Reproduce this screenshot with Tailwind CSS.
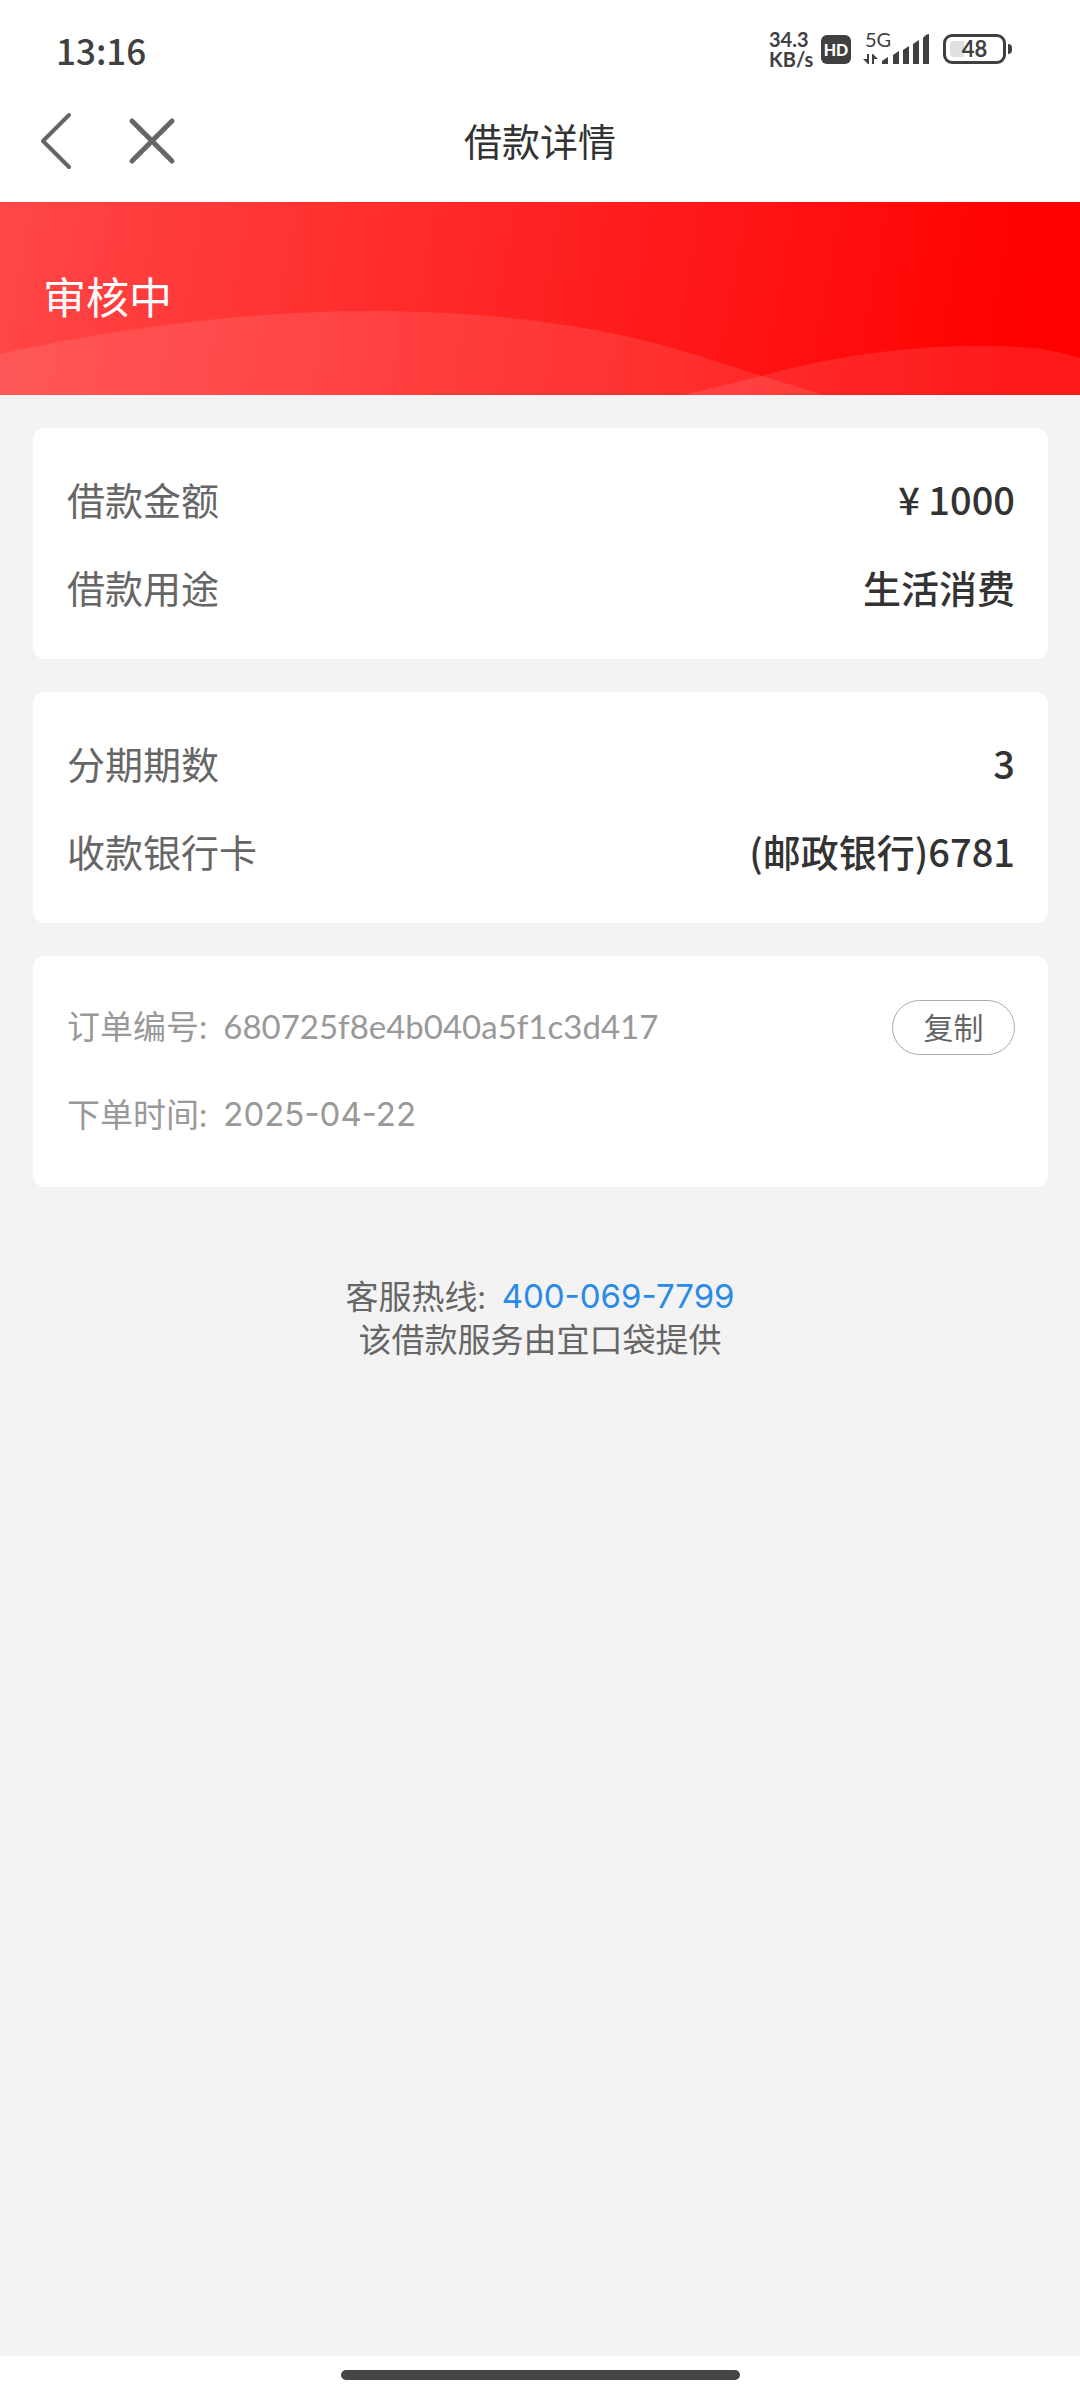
<!DOCTYPE html>
<html lang="zh-CN">
  <head>
    <meta charset="UTF-8" />
    <meta name="viewport" content="width=device-width, initial-scale=1.0" />
    <title>借款详情</title>
    <script src="https://cdn.jsdelivr.net/npm/@tailwindcss/browser@4"></script>
  </head>
  <body
    class="min-h-screen flex flex-col bg-[#f3f3f3] text-[#666666] font-['Lato','Noto_Sans_CJK_SC',sans-serif]"
  >
    <header class="bg-white text-[#333333]">
      <!-- Status bar -->
      <div class="flex items-center justify-between h-[98px] pl-14 pr-[68px] text-[#404040]">
        <span class="text-[35px] leading-none font-medium font-['Noto_Sans_CJK_SC',sans-serif]">13:16</span>
        <div class="flex items-center">
          <div class="w-[46px] text-[20px] leading-5 font-bold">
            <p>34.3</p>
            <p>KB/s</p>
          </div>
          <span
            class="ml-1.5 w-[30px] h-[29px] rounded-md bg-[#404040] text-white text-[16px] leading-[29px] text-center font-black"
            >HD</span
          >
          <div class="relative ml-3 w-[68px] h-8">
            <span class="absolute left-0.5 -top-1 text-[20px] leading-5">5G</span>
            <svg class="w-full h-full" viewBox="0 0 68 32" fill="#404040">
              <path d="M4 21h2v10H5l-5-5h4zM9 21h1l5 5h-4v5H9z" />
              <path d="M19 31v-3l6-4v7zM30 31V22l6-4v13zM40 31V17l6-4v18zM50 31V11l6-4v24zM60 31V5q3-4 6-4v30z" />
            </svg>
          </div>
          <div class="flex items-center ml-3">
            <div class="relative w-[63px] h-[30px] rounded-[9px] border-3 border-[#404040]">
              <span class="absolute left-1 top-1 w-[14px] h-4 rounded-l-sm bg-[#e0e0e0]"></span>
              <span class="absolute inset-0 text-center text-[22px] leading-6 font-bold">48</span>
            </div>
            <span class="ml-0.5 w-1 h-[10px] rounded-r-sm bg-[#404040]"></span>
          </div>
        </div>
      </div>

      <!-- Navigation bar -->
      <div class="grid grid-cols-3 items-center h-[104px] px-9 pb-[18px]">
        <div class="flex items-center gap-[46px]">
          <button type="button" aria-label="返回">
            <svg class="w-10 h-[60px]" viewBox="0 0 40 60" fill="none" stroke="#666666" stroke-width="4" stroke-linecap="round" stroke-linejoin="round">
              <path d="M33 4 7 30l26 26" />
            </svg>
          </button>
          <button type="button" aria-label="关闭">
            <svg class="w-[60px] h-[60px]" viewBox="0 0 60 60" fill="none" stroke="#666666" stroke-width="5" stroke-linecap="round">
              <path d="m10 10 40 40M50 10 10 50" />
            </svg>
          </button>
        </div>
        <h1 class="text-center text-[38px]">借款详情</h1>
      </div>
    </header>

    <main class="flex-grow">
      <section class="relative flex items-center h-[193px] px-[43px] bg-linear-100/srgb from-[#ff4747] to-[#ff0000] to-95%">
        <svg class="absolute inset-0 w-full h-full" viewBox="0 0 1080 193" preserveAspectRatio="none" fill="#ffffff" fill-opacity="0.1">
          <path d="M0 152C124 125 250 109 370 109S600 123 690 151L762 174 824 193H0z" />
          <path d="M683 193 762 174C830 154 910 144 975 144S1050 148 1080 156V193z" />
        </svg>
        <h2 class="relative text-[43px] text-white">审核中</h2>
      </section>

      <div class="flex flex-col gap-[33px] py-[33px] pl-[33px] pr-8">
        <dl class="rounded-xl bg-white pl-[34px] pr-[33px] pt-[26px] pb-[29px] text-[38px] font-['Noto_Sans_CJK_SC',sans-serif]">
          <div class="flex items-center justify-between h-[88px]">
            <dt>借款金额</dt>
            <dd class="font-medium text-[#333333]">¥ 1000</dd>
          </div>
          <div class="flex items-center justify-between h-[88px]">
            <dt>借款用途</dt>
            <dd class="font-medium text-[#333333]">生活消费</dd>
          </div>
        </dl>

        <dl class="rounded-xl bg-white pl-[34px] pr-[33px] pt-[26px] pb-[29px] text-[38px] font-['Noto_Sans_CJK_SC',sans-serif]">
          <div class="flex items-center justify-between h-[88px]">
            <dt>分期期数</dt>
            <dd class="font-medium text-[#333333]">3</dd>
          </div>
          <div class="flex items-center justify-between h-[88px]">
            <dt>收款银行卡</dt>
            <dd class="font-medium text-[#333333]">(邮政银行)6781</dd>
          </div>
        </dl>

        <dl class="rounded-xl bg-white pl-[34px] pr-[33px] pt-[27px] pb-7 text-[33px] text-[#999999]">
          <div class="flex items-center gap-4 h-[88px]">
            <dt>订单编号:</dt>
            <dd id="order-no">680725f8e4b040a5f1c3d417</dd>
            <dd class="ml-auto flex">
              <button
                type="button"
                id="copy-btn"
                class="w-[123px] h-[55px] rounded-full border border-[#aaaaaa] text-[30px] leading-none text-[#666666]"
              >
                复制
              </button>
            </dd>
          </div>
          <div class="flex items-center gap-4 h-[88px]">
            <dt>下单时间:</dt>
            <dd class="font-['Inter',sans-serif]">2025-04-22</dd>
          </div>
        </dl>
      </div>

      <div class="pt-[55px] text-center text-[33px] leading-[43px]">
        <p class="flex justify-center gap-4">
          <span>客服热线:</span>
          <a href="tel:400-069-7799" class="text-[#2a8ae8] font-['Inter',sans-serif]">400-069-7799</a>
        </p>
        <p>该借款服务由宜口袋提供</p>
      </div>
    </main>

    <footer class="flex justify-center h-11 pt-[14px] bg-white">
      <span class="w-[399px] h-[10px] rounded-full bg-[#464646]"></span>
    </footer>

    <script>
      document.getElementById("copy-btn").addEventListener("click", function () {
        navigator.clipboard.writeText(
          document.getElementById("order-no").textContent
        );
      });
    </script>
  </body>
</html>
